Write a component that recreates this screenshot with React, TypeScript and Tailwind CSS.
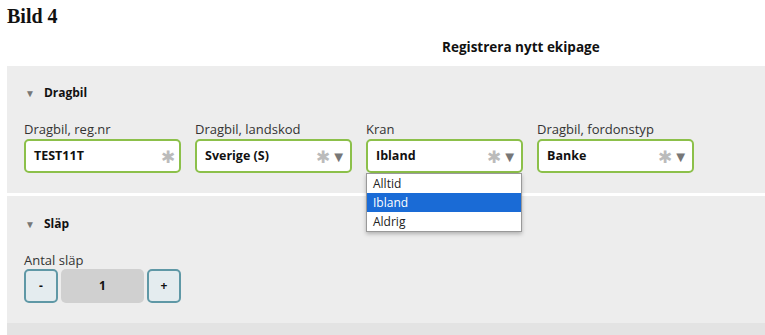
import React from "react";

const font = { fontFamily: '"Open Sans", "Liberation Sans", sans-serif' };

function Field({ label, value, select, children }: { label: string; value: string; select?: boolean; children?: React.ReactNode }) {
  return (
    <div className="relative w-[157px] shrink-0">
      <div className="text-[13px] leading-[17px] text-[#333]">{label}</div>
      <div className="mt-[1px] flex h-[34px] items-center rounded-[5px] border-2 border-[#8cc04a] bg-white pl-[8px] pr-[4px]">
        <span className="flex-1 text-[12.5px] font-bold text-[#111]">{value}</span>
        <span className="text-[17px] leading-none text-[#bbb]">✱</span>
        {select && <span className="ml-[1px] text-[15px] leading-none text-[#777]">▼</span>}
      </div>
      {children}
    </div>
  );
}

export default function App() {
  return (
    <div className="h-[335px] w-[765px] overflow-hidden bg-white" style={font}>
      <div className="pl-[7px] pt-[3px] text-[20px] font-bold leading-[26px] text-[#111]" style={{ fontFamily: '"Liberation Serif", serif' }}>
        Bild 4
      </div>
      <div className="pl-[442px] pt-[8px] text-[13.5px] font-bold leading-[20px] text-[#111]">Registrera nytt ekipage</div>
      <div className="ml-[7px] mt-[9px] bg-[#ededed]">
        {/* Dragbil */}
        <div className="px-[17px] pb-[20px] pt-[17px]">
          <div className="flex h-[20px] items-center gap-[9px] pl-[1px]">
            <span className="text-[10px] text-[#777]">▼</span>
            <span className="text-[12px] font-bold text-[#111]">Dragbil</span>
          </div>
          <div className="mt-[18px] flex gap-[14px]">
            <Field label="Dragbil, reg.nr" value="TEST11T" />
            <Field label="Dragbil, landskod" value="Sverige (S)" select />
            <Field label="Kran" value="Ibland" select>
              <div className="absolute left-0 top-full z-10 w-[156px] border border-[#999] bg-white text-[12px] text-[#222] shadow-[0_2px_4px_rgba(0,0,0,0.25)]">
                <div className="h-[19px] pl-[6px] leading-[19px]">Alltid</div>
                <div className="h-[19px] bg-[#1a6bd6] pl-[6px] leading-[19px] text-white">Ibland</div>
                <div className="h-[19px] pl-[6px] leading-[19px]">Aldrig</div>
              </div>
            </Field>
            <Field label="Dragbil, fordonstyp" value="Banke" select />
          </div>
        </div>
        <div className="h-[3px] bg-white" />
        {/* Släp */}
        <div className="px-[17px] pb-[20px] pt-[18px]">
          <div className="flex h-[20px] items-center gap-[9px] pl-[1px]">
            <span className="text-[10px] text-[#777]">▼</span>
            <span className="text-[12px] font-bold text-[#111]">Släp</span>
          </div>
          <div className="mt-[18px] text-[13px] leading-[17px] text-[#333]">Antal släp</div>
          <div className="flex gap-[3px]">
            <button className="flex h-[34px] w-[34px] items-center justify-center rounded-[5px] border-2 border-[#5f98a6] bg-[#e4ecef] text-[12px] font-bold text-[#111]">-</button>
            <div className="flex h-[34px] w-[83px] items-center justify-center rounded-[5px] bg-[#d0d0d0] text-[12px] font-bold text-[#111]">1</div>
            <button className="flex h-[34px] w-[34px] items-center justify-center rounded-[5px] border-2 border-[#5f98a6] bg-[#e4ecef] text-[12px] font-bold text-[#111]">+</button>
          </div>
        </div>
        <div className="h-[12px] bg-[#e3e3e3]" />
      </div>
    </div>
  );
}
